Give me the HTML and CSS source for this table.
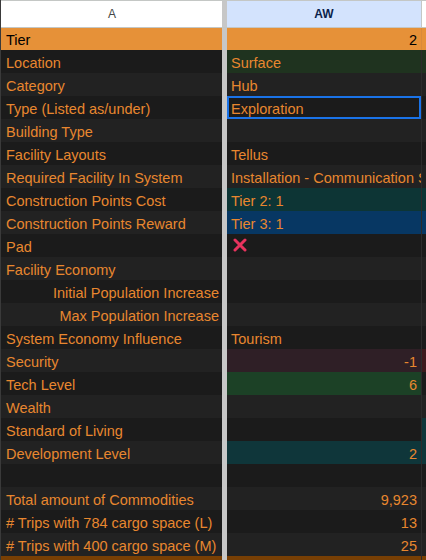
FILE: index.html
```html
<!DOCTYPE html>
<html>
<head>
<meta charset="utf-8">
<link rel="stylesheet" href="styles.css">
</head>
<body>
<div class="sheet">
  <div class="row head">
    <div class="cell a hdr">A</div>
    <div class="sep"></div>
    <div class="cell b hdr sel">AW</div>
    <div class="cell c hdr"></div>
  </div>
  <div class="row tier">
    <div class="cell a">Tier</div><div class="sep"></div>
    <div class="cell b num">2</div><div class="cell c"></div>
  </div>
  <div class="row odd">
    <div class="cell a">Location</div><div class="sep"></div>
    <div class="cell b green">Surface</div><div class="cell c green"></div>
  </div>
  <div class="row even">
    <div class="cell a">Category</div><div class="sep"></div>
    <div class="cell b">Hub</div><div class="cell c"></div>
  </div>
  <div class="row odd">
    <div class="cell a">Type (Listed as/under)</div><div class="sep"></div>
    <div class="cell b active">Exploration</div><div class="cell c"></div>
  </div>
  <div class="row even">
    <div class="cell a">Building Type</div><div class="sep"></div>
    <div class="cell b"></div><div class="cell c"></div>
  </div>
  <div class="row odd">
    <div class="cell a">Facility Layouts</div><div class="sep"></div>
    <div class="cell b">Tellus</div><div class="cell c"></div>
  </div>
  <div class="row even">
    <div class="cell a">Required Facility In System</div><div class="sep"></div>
    <div class="cell b">Installation - Communication Station</div><div class="cell c"></div>
  </div>
  <div class="row odd">
    <div class="cell a">Construction Points Cost</div><div class="sep"></div>
    <div class="cell b teal">Tier 2: 1</div><div class="cell c teal"></div>
  </div>
  <div class="row even">
    <div class="cell a">Construction Points Reward</div><div class="sep"></div>
    <div class="cell b blue">Tier 3: 1</div><div class="cell c blue"></div>
  </div>
  <div class="row odd">
    <div class="cell a">Pad</div><div class="sep"></div>
    <div class="cell b"><svg class="x" width="14" height="14" viewBox="0 0 14 14"><path d="M2 2 L12 12 M12 2 L2 12" stroke="#e8335e" stroke-width="3" stroke-linecap="round" fill="none"/></svg></div><div class="cell c"></div>
  </div>
  <div class="row even">
    <div class="cell a">Facility Economy</div><div class="sep"></div>
    <div class="cell b"></div><div class="cell c"></div>
  </div>
  <div class="row odd">
    <div class="cell a right">Initial Population Increase</div><div class="sep"></div>
    <div class="cell b"></div><div class="cell c"></div>
  </div>
  <div class="row even">
    <div class="cell a right">Max Population Increase</div><div class="sep"></div>
    <div class="cell b"></div><div class="cell c"></div>
  </div>
  <div class="row odd">
    <div class="cell a">System Economy Influence</div><div class="sep"></div>
    <div class="cell b">Tourism</div><div class="cell c"></div>
  </div>
  <div class="row even">
    <div class="cell a">Security</div><div class="sep"></div>
    <div class="cell b num maroon">-1</div><div class="cell c red"></div>
  </div>
  <div class="row odd">
    <div class="cell a">Tech Level</div><div class="sep"></div>
    <div class="cell b num dkgreen">6</div><div class="cell c"></div>
  </div>
  <div class="row even">
    <div class="cell a">Wealth</div><div class="sep"></div>
    <div class="cell b"></div><div class="cell c"></div>
  </div>
  <div class="row odd">
    <div class="cell a">Standard of Living</div><div class="sep"></div>
    <div class="cell b"></div><div class="cell c teal2"></div>
  </div>
  <div class="row even">
    <div class="cell a">Development Level</div><div class="sep"></div>
    <div class="cell b num teal2">2</div><div class="cell c teal2"></div>
  </div>
  <div class="row odd">
    <div class="cell a"></div><div class="sep"></div>
    <div class="cell b"></div><div class="cell c"></div>
  </div>
  <div class="row even">
    <div class="cell a">Total amount of Commodities</div><div class="sep"></div>
    <div class="cell b num">9,923</div><div class="cell c"></div>
  </div>
  <div class="row odd">
    <div class="cell a"># Trips with 784 cargo space (L)</div><div class="sep"></div>
    <div class="cell b num">13</div><div class="cell c"></div>
  </div>
  <div class="row even">
    <div class="cell a"># Trips with 400 cargo space (M)</div><div class="sep"></div>
    <div class="cell b num">25</div><div class="cell c"></div>
  </div>
  <div class="row brown">
    <div class="cell a"></div><div class="sep"></div>
    <div class="cell b"></div><div class="cell c"></div>
  </div>
</div>
</body>
</html>
```

FILE: styles.css
```css
* { box-sizing: border-box; }
html, body { margin: 0; padding: 0; background: #1c1c1c; }
body { width: 426px; height: 560px; overflow: hidden; }
.sheet {
  font-family: "Liberation Sans", Arial, sans-serif;
  font-size: 14.5px;
  color: #e8872f;
  border-left: 1px solid #3a3a3a;
}
.row {
  display: grid;
  grid-template-columns: 221px 5px 194px 1fr;
  height: 23px;
  line-height: 22px;
}
.row .cell { padding-top: 2px; }
.row.head {
  height: 28px;
  line-height: 26px;
  background: #fff;
  border-top: 1px solid #c4c7c5;
  border-bottom: 1px solid #c4c7c5;
}
.row.head .cell { padding-top: 0; }
.row.tier { height: 22px; line-height: 21px; background: #e69138; color: #000; }
.row.odd { background: #1b1b1b; }
.row.even { background: #222222; }
.row.brown { background: #783f04; }
.cell {
  white-space: nowrap;
  overflow: hidden;
  padding: 0 4px 0 5px;
}
.cell.b { padding-left: 4px; }
.cell.c { border-left: 1px solid #2c2c2c; padding: 0; }
.head .cell.c { border-left: 1px solid #c4c7c5; }
.tier .cell.c { border-left: 1px solid #d98a3a; }
.sep { background: #c7c7c7; }
.hdr {
  text-align: center;
  font-size: 12px;
  color: #444746;
}
.hdr.sel {
  background: #d3e3fd;
  color: #0b1f4b;
  font-weight: bold;
}
.num { text-align: right; }
.right { text-align: right; padding-right: 3px; }
.green { background: #1f331f; }
.teal { background: #0d3535; }
.blue { background: #073763; }
.maroon { background: #2f1f26; }
.red { background: #3d1a1d; }
.dkgreen { background: #1c4126; }
.teal2 { background: #0f363a; }
.active {
  box-shadow: inset 0 0 0 2px #1a73e8;
}
.x { display: block; margin: 2px 0 0 2px; }
```
